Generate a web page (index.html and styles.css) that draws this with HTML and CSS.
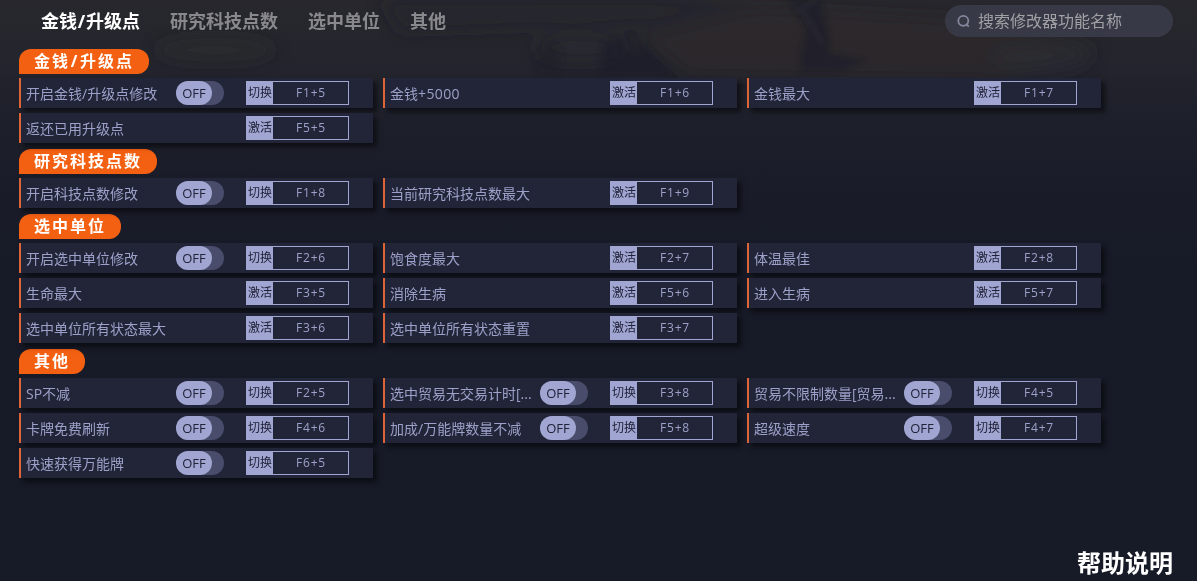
FILE: index.html
```html
<!DOCTYPE html>
<html lang="zh-CN">
<head>
    <meta charset="UTF-8">
    <meta name="viewport" content="width=device-width, initial-scale=1.0">
    <title>修改器</title>
    <link rel="stylesheet" href="styles.css">
</head>
<body>
    <!-- Faded scenery behind the top of the page -->
    <svg class="scene" width="1197" height="260" viewBox="0 0 1197 260" aria-hidden="true">
        <defs>
            <filter id="soft" x="-20%" y="-50%" width="140%" height="200%"><feGaussianBlur stdDeviation="8"/></filter>
            <filter id="edge" x="-20%" y="-20%" width="140%" height="140%"><feGaussianBlur stdDeviation="2.5"/></filter>
        </defs>
        <g filter="url(#soft)">
            <path d="M640 36 L760 8 L980 20 L1100 50 L1000 80 L690 76 Z" fill="#2f2e2d" opacity=".5"/>
            <path d="M380 0 H760 L650 24 L400 32 Z" fill="#22232a" opacity=".45"/>
            <ellipse cx="580" cy="48" rx="45" ry="14" fill="#2b2c32" opacity=".5"/>
            <ellipse cx="1040" cy="58" rx="50" ry="14" fill="#2c2d35" opacity=".5"/>
            <ellipse cx="215" cy="50" rx="60" ry="12" fill="#2c2d33" opacity=".4"/>
        </g>
        <g filter="url(#edge)" fill="#1d1f2a" opacity=".6">
            <path d="M602 42 L622 38 L634 54 L646 44 L672 76 H600 Z"/>
            <path d="M790 0 H820 L828 30 L830 54 L866 60 L840 72 H802 L800 56 L806 30 Z"/>
            <path d="M535 58 L549 38 L562 50 L560 74 H538 Z" opacity=".6"/>
        </g>
        <path d="M802 8 L823 45 M816 0 L796 12" stroke="#33343c" stroke-width="3" opacity=".5" filter="url(#edge)"/>
    </svg>

    <header>
        <nav class="tabs">
            <a class="tab active">金钱<span class="slash">/</span>升级点</a>
            <a class="tab">研究科技点数</a>
            <a class="tab">选中单位</a>
            <a class="tab">其他</a>
        </nav>
        <div class="search">
            <svg class="search-icon" width="14" height="14" viewBox="0 0 14 14">
                <circle cx="6.3" cy="6.8" r="5"/>
                <path d="M9.2 9.8 L11.8 12.6"/>
            </svg>
            <span>搜索修改器功能名称</span>
        </div>
    </header>

    <main>
        <section>
            <h2>金钱<span class="slash">/</span>升级点</h2>
            <div class="cards">
                <div class="card"><span class="name">开启金钱/升级点修改</span><span class="toggle"><b>OFF</b></span><div class="key"><i>切换</i><span>F1+5</span></div></div>
                <div class="card"><span class="name">金钱<span class="num">+5000</span></span><div class="key"><i>激活</i><span>F1+6</span></div></div>
                <div class="card"><span class="name">金钱最大</span><div class="key"><i>激活</i><span>F1+7</span></div></div>
                <div class="card"><span class="name">返还已用升级点</span><div class="key"><i>激活</i><span>F5+5</span></div></div>
            </div>
        </section>

        <section>
            <h2>研究科技点数</h2>
            <div class="cards">
                <div class="card"><span class="name">开启科技点数修改</span><span class="toggle"><b>OFF</b></span><div class="key"><i>切换</i><span>F1+8</span></div></div>
                <div class="card"><span class="name">当前研究科技点数最大</span><div class="key"><i>激活</i><span>F1+9</span></div></div>
            </div>
        </section>

        <section>
            <h2>选中单位</h2>
            <div class="cards">
                <div class="card"><span class="name">开启选中单位修改</span><span class="toggle"><b>OFF</b></span><div class="key"><i>切换</i><span>F2+6</span></div></div>
                <div class="card"><span class="name">饱食度最大</span><div class="key"><i>激活</i><span>F2+7</span></div></div>
                <div class="card"><span class="name">体温最佳</span><div class="key"><i>激活</i><span>F2+8</span></div></div>
                <div class="card"><span class="name">生命最大</span><div class="key"><i>激活</i><span>F3+5</span></div></div>
                <div class="card"><span class="name">消除生病</span><div class="key"><i>激活</i><span>F5+6</span></div></div>
                <div class="card"><span class="name">进入生病</span><div class="key"><i>激活</i><span>F5+7</span></div></div>
                <div class="card"><span class="name">选中单位所有状态最大</span><div class="key"><i>激活</i><span>F3+6</span></div></div>
                <div class="card"><span class="name">选中单位所有状态重置</span><div class="key"><i>激活</i><span>F3+7</span></div></div>
            </div>
        </section>

        <section>
            <h2>其他</h2>
            <div class="cards">
                <div class="card"><span class="name">SP不减</span><span class="toggle"><b>OFF</b></span><div class="key"><i>切换</i><span>F2+5</span></div></div>
                <div class="card"><span class="name">选中贸易无交易计时[...</span><span class="toggle"><b>OFF</b></span><div class="key"><i>切换</i><span>F3+8</span></div></div>
                <div class="card"><span class="name">贸易不限制数量[贸易...</span><span class="toggle"><b>OFF</b></span><div class="key"><i>切换</i><span>F4+5</span></div></div>
                <div class="card"><span class="name">卡牌免费刷新</span><span class="toggle"><b>OFF</b></span><div class="key"><i>切换</i><span>F4+6</span></div></div>
                <div class="card"><span class="name">加成/万能牌数量不减</span><span class="toggle"><b>OFF</b></span><div class="key"><i>切换</i><span>F5+8</span></div></div>
                <div class="card"><span class="name">超级速度</span><span class="toggle"><b>OFF</b></span><div class="key"><i>切换</i><span>F4+7</span></div></div>
                <div class="card"><span class="name">快速获得万能牌</span><span class="toggle"><b>OFF</b></span><div class="key"><i>切换</i><span>F6+5</span></div></div>
            </div>
        </section>
    </main>

    <footer><a class="help">帮助说明</a></footer>
</body>
</html>
```
FILE: styles.css
```css
* {
    box-sizing: border-box;
}

html, body {
    margin: 0;
    padding: 0;
    height: 100%;
    overflow: hidden;
}

body {
    background: linear-gradient(#27272d 0, #25262d 50px, #1e202b 110px, #1a1c29 180px, #171a27 260px);
    font-family: "Open Sans", "Noto Sans CJK SC", sans-serif;
    color: #9da1c9;
    display: flex;
    flex-direction: column;
    position: relative;
}

.scene {
    position: absolute;
    top: 0;
    left: 0;
}

header {
    display: flex;
    justify-content: space-between;
    align-items: flex-start;
    height: 49px;
    padding: 5px 24px 0 41px;
    position: relative;
}

.tabs {
    display: flex;
    gap: 30px;
}

.tab {
    font-size: 18px;
    font-weight: bold;
    line-height: 32px;
    color: #89898d;
    white-space: nowrap;
}

.tab.active {
    color: #fff;
}

.tab .slash {
    display: inline-block;
    width: 9px;
    text-align: center;
}

/* Search box */
.search {
    display: flex;
    align-items: center;
    gap: 7px;
    width: 228px;
    height: 32px;
    padding: 0 12px;
    border-radius: 16px;
    background-color: #383946;
    font-size: 16px;
    line-height: 34px;
    color: #a0a0a5;
}

.search-icon {
    fill: none;
    stroke: #85869b;
    stroke-width: 1.8;
}

main {
    flex: 1;
    padding-left: 19px;
    position: relative;
}

section {
    margin-bottom: 6px;
}

h2 {
    width: fit-content;
    height: 25px;
    margin: 0 0 4px;
    padding: 0 15px;
    border-radius: 12px 12px 12px 0;
    background-color: #f46012;
    color: #fff;
    font-size: 16px;
    line-height: 24px;
    letter-spacing: 2px;
}

h2 .slash {
    display: inline-block;
    width: 10px;
    text-align: center;
}

.cards {
    display: grid;
    grid-template-columns: repeat(3, 354px);
    gap: 5px 10px;
}

.card {
    display: flex;
    align-items: center;
    height: 30px;
    padding: 0 24px 0 5px;
    border-left: 2px solid #dc6437;
    background-color: #222437;
    box-shadow: 4px 4px 5px rgba(0, 0, 0, 0.5);
}

.name {
    width: 150px;
    height: 30px;
    font-size: 14px;
    line-height: 32px;
    white-space: nowrap;
}

.num {
    letter-spacing: 0.4px;
}

/* Toggle switch */
.toggle {
    width: 48px;
    height: 24px;
    border-radius: 12px;
    background-color: #494d6b;
}

.toggle b {
    display: block;
    width: 36px;
    height: 24px;
    border-radius: 12px;
    background-color: #a0a5d1;
    color: #202238;
    font-size: 13px;
    font-weight: normal;
    line-height: 25px;
    text-align: center;
}

/* Hotkey box */
.key {
    display: flex;
    width: 103px;
    height: 24px;
    margin-left: auto;
    border: 1px solid #a0a5d1;
    font-size: 12px;
    line-height: 22px;
    text-align: center;
}

.key i {
    width: 26px;
    background-color: #a0a5d1;
    color: #202238;
    font-style: normal;
}

.key span {
    flex: 1;
    padding-left: 1px;
    letter-spacing: 0.8px;
}

footer {
    display: flex;
    justify-content: flex-end;
    padding-right: 24px;
    position: relative;
}

.help {
    color: #fff;
    font-size: 24px;
    font-weight: bold;
    line-height: 36px;
}
```
